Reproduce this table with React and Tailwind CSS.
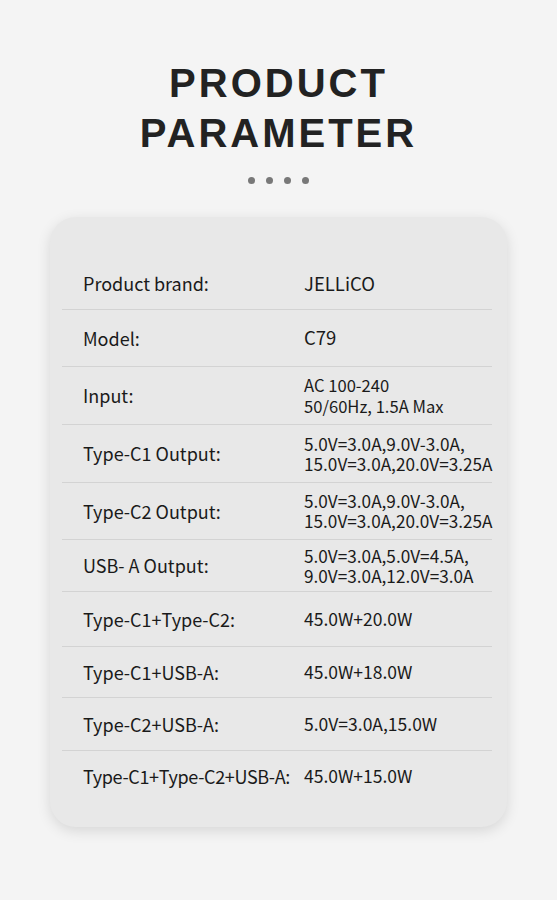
import React from 'react';

const rows = [
  { label: 'Product brand:', value: ['JELLiCO'], h: 'h-[52px]', size: 'text-[18.5px]' },
  { label: 'Model:', value: ['C79'], h: 'h-[57px]', size: 'text-[18.5px]' },
  { label: 'Input:', value: ['AC 100-240', '50/60Hz, 1.5A Max'], h: 'h-[58px]', size: 'text-[16.6px] leading-[21px]' },
  { label: 'Type-C1 Output:', value: ['5.0V=3.0A,9.0V-3.0A,', '15.0V=3.0A,20.0V=3.25A'], h: 'h-[58px]', size: 'text-[17.2px] leading-[20px]' },
  { label: 'Type-C2 Output:', value: ['5.0V=3.0A,9.0V-3.0A,', '15.0V=3.0A,20.0V=3.25A'], h: 'h-[57px]', size: 'text-[17.2px] leading-[20px]' },
  { label: 'USB- A Output:', value: ['5.0V=3.0A,5.0V=4.5A,', '9.0V=3.0A,12.0V=3.0A'], h: 'h-[52px]', size: 'text-[17.2px] leading-[20px]' },
  { label: 'Type-C1+Type-C2:', value: ['45.0W+20.0W'], h: 'h-[55px]', size: 'text-[17.5px]' },
  { label: 'Type-C1+USB-A:', value: ['45.0W+18.0W'], h: 'h-[51px]', size: 'text-[17.5px]' },
  { label: 'Type-C2+USB-A:', value: ['5.0V=3.0A,15.0W'], h: 'h-[53px]', size: 'text-[17.5px]' },
  { label: 'Type-C1+Type-C2+USB-A:', value: ['45.0W+15.0W'], h: 'h-[50px]', size: 'text-[17.5px]', tight: true },
];

export default function App() {
  return (
    <div className="min-h-[900px] w-full bg-[#f4f4f4] pt-[58px] pb-[74px] text-[#1a1a1a]">
      {/* heading */}
      <h1 className="text-center font-['Liberation_Sans',Arial,sans-serif] text-[40px] font-bold leading-[50px] tracking-[3px] text-[#222]">
        PRODUCT
        <br />
        PARAMETER
      </h1>
      <div className="mt-[19px] flex justify-center gap-[11px]">
        {[0, 1, 2, 3].map((i) => (
          <span key={i} className="h-[7px] w-[7px] rounded-full bg-[#787878]" />
        ))}
      </div>

      {/* parameter card */}
      <div className="mx-[50px] mt-[33px] rounded-[26px] bg-[#e8e8e8] pt-[41px] pb-[26px] pl-[12px] pr-[15px] shadow-[0_4px_14px_rgba(0,0,0,0.12)] font-['Noto_Sans_CJK_SC','Noto_Sans',sans-serif]">
        {rows.map((row, i) => (
          <div
            key={row.label}
            className={`grid grid-cols-[242px_1fr] items-center ${row.h} ${
              i < rows.length - 1 ? 'border-b border-[#d3d3d3]' : ''
            }`}
          >
            <div className={`pl-[21px] text-[18px] whitespace-nowrap ${row.tight ? 'tracking-[-0.35px]' : ''}`}>
              {row.label}
            </div>
            <div className={`${row.size} whitespace-nowrap`}>
              {row.value.map((v) => (
                <div key={v}>{v}</div>
              ))}
            </div>
          </div>
        ))}
      </div>
    </div>
  );
}
